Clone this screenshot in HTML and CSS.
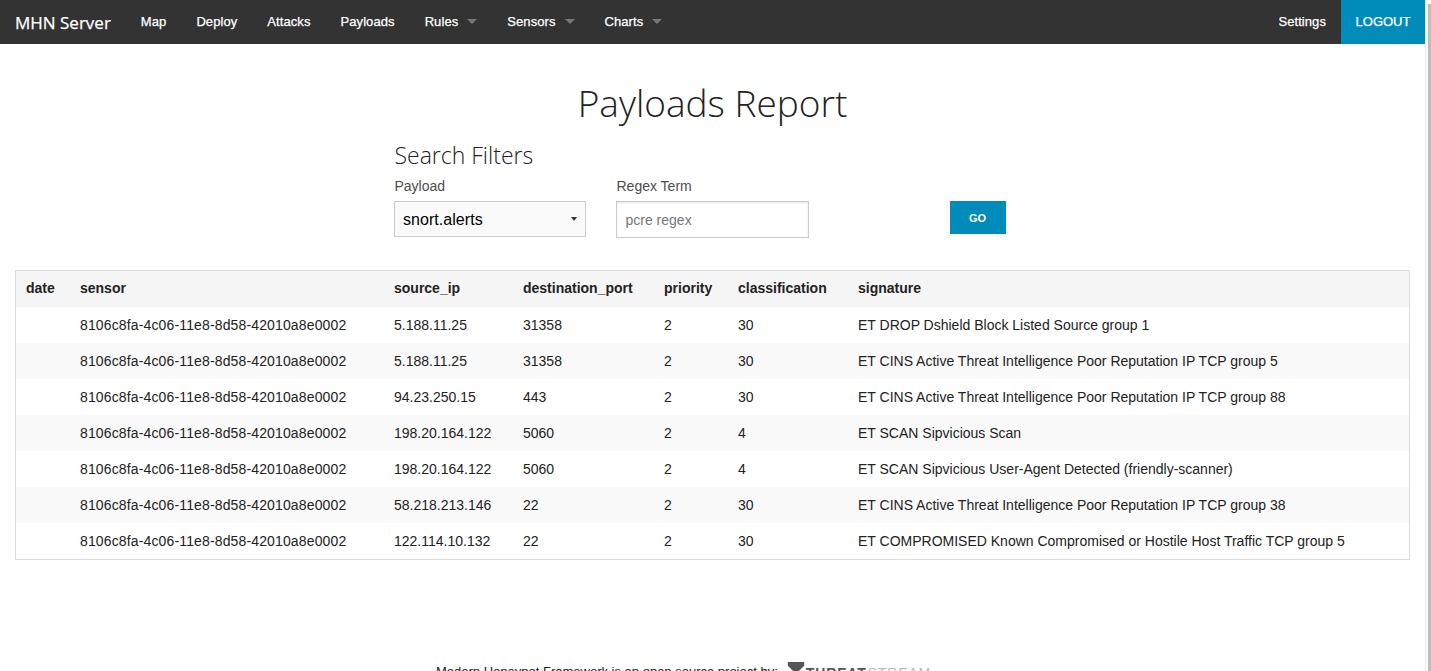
FILE: index.html
```html
<!DOCTYPE html>
<html lang="en">
<head>
    <meta charset="UTF-8">
    <title>Payloads Report</title>
    <link rel="stylesheet" href="styles.css">
</head>
<body>
    <div class="page">
        <nav class="topbar">
            <a class="brand" href="#">MHN Server</a>
            <ul class="menu">
                <li><a href="#">Map</a></li>
                <li><a href="#">Deploy</a></li>
                <li><a href="#">Attacks</a></li>
                <li><a href="#">Payloads</a></li>
                <li><a class="dropdown" href="#">Rules</a></li>
                <li><a class="dropdown" href="#">Sensors</a></li>
                <li><a class="dropdown" href="#">Charts</a></li>
            </ul>
            <a class="settings" href="#">Settings</a>
            <a class="logout" href="#">LOGOUT</a>
        </nav>

        <h1>Payloads Report</h1>

        <form class="filters">
            <h3>Search Filters</h3>
            <div class="filter-row">
                <div class="field field-payload">
                    <label for="payload">Payload</label>
                    <div class="select-box" id="payload">snort.alerts</div>
                </div>
                <div class="field field-regex">
                    <label for="regex">Regex Term</label>
                    <input type="text" id="regex" placeholder="pcre regex">
                </div>
                <button type="button" class="go">GO</button>
            </div>
        </form>

        <table class="report">
            <thead>
                <tr>
                    <th class="c-date">date</th>
                    <th class="c-sensor">sensor</th>
                    <th class="c-ip">source_ip</th>
                    <th class="c-port">destination_port</th>
                    <th class="c-prio">priority</th>
                    <th class="c-class">classification</th>
                    <th>signature</th>
                </tr>
            </thead>
            <tbody>
                <tr><td></td><td class="uuid">8106c8fa-4c06-11e8-8d58-42010a8e0002</td><td>5.188.11.25</td><td>31358</td><td>2</td><td>30</td><td>ET DROP Dshield Block Listed Source group 1</td></tr>
                <tr><td></td><td class="uuid">8106c8fa-4c06-11e8-8d58-42010a8e0002</td><td>5.188.11.25</td><td>31358</td><td>2</td><td>30</td><td>ET CINS Active Threat Intelligence Poor Reputation IP TCP group 5</td></tr>
                <tr><td></td><td class="uuid">8106c8fa-4c06-11e8-8d58-42010a8e0002</td><td>94.23.250.15</td><td>443</td><td>2</td><td>30</td><td>ET CINS Active Threat Intelligence Poor Reputation IP TCP group 88</td></tr>
                <tr><td></td><td class="uuid">8106c8fa-4c06-11e8-8d58-42010a8e0002</td><td>198.20.164.122</td><td>5060</td><td>2</td><td>4</td><td>ET SCAN Sipvicious Scan</td></tr>
                <tr><td></td><td class="uuid">8106c8fa-4c06-11e8-8d58-42010a8e0002</td><td>198.20.164.122</td><td>5060</td><td>2</td><td>4</td><td>ET SCAN Sipvicious User-Agent Detected (friendly-scanner)</td></tr>
                <tr><td></td><td class="uuid">8106c8fa-4c06-11e8-8d58-42010a8e0002</td><td>58.218.213.146</td><td>22</td><td>2</td><td>30</td><td>ET CINS Active Threat Intelligence Poor Reputation IP TCP group 38</td></tr>
                <tr><td></td><td class="uuid">8106c8fa-4c06-11e8-8d58-42010a8e0002</td><td>122.114.10.132</td><td>22</td><td>2</td><td>30</td><td>ET COMPROMISED Known Compromised or Hostile Host Traffic TCP group 5</td></tr>
            </tbody>
        </table>

        <footer class="credits">
            <span>Modern <a href="#">Honeypot Framework</a> is an open source project by:</span>
            <span class="logo">
                <svg width="18" height="20" viewBox="0 0 18 22"><path d="M0 0H18V4L11 11L18 18V22H0V18L7 11L0 4Z" fill="#555"/></svg>
                <span class="logo-a">THREAT</span><span class="logo-b">STREAM</span>
            </span>
        </footer>
    </div>
    <div class="scrollbar"><div class="scroll-thumb"></div></div>
</body>
</html>
```

FILE: styles.css
```css
html, body {
    margin: 0;
    padding: 0;
    height: 100%;
    overflow: hidden;
}

body {
    display: flex;
    font-family: "Liberation Sans", Arial, sans-serif;
    color: #222;
    background-color: #fff;
}

.page {
    flex: 1;
    height: 720px;
}

.scrollbar {
    display: flex;
    justify-content: flex-end;
    width: 6px;
    box-sizing: border-box;
    padding-top: 4px;
    background-color: #fbfbfb;
    border-left: 1px solid #e8e8e8;
}

.scroll-thumb {
    width: 3px;
    background-color: #bdbdbd;
}

/* top bar */
.topbar {
    display: flex;
    align-items: center;
    height: 44px;
    background-color: #333;
}

.topbar a {
    color: #fff;
    text-decoration: none;
    font-size: 13px;
    letter-spacing: 0.08px;
    -webkit-text-stroke: 0.25px #fff;
}

.topbar .brand {
    font-family: "Open Sans", sans-serif;
    font-size: 17px;
    letter-spacing: 0;
    margin-left: 15px;
    margin-right: 15px;
}

.menu {
    display: flex;
    list-style: none;
    margin: 0 0 2px;
    padding: 0;
    flex: 1;
}

.menu li {
    padding: 0 15px;
}

.menu .dropdown::after {
    content: "";
    display: inline-block;
    margin-left: 9px;
    vertical-align: 2px;
    border: 5px solid transparent;
    border-top-color: #777;
    border-bottom-width: 0;
}

.topbar .settings {
    margin: 0 15px 2px 0;
}

.topbar .logout {
    width: 84px;
    height: 44px;
    line-height: 43px;
    text-align: center;
    letter-spacing: 0;
    background-color: #008cba;
}

/* heading + filters */
h1 {
    margin: 0;
    padding-top: 36px;
    font-family: "Open Sans", sans-serif;
    font-weight: 300;
    font-size: 37px;
    line-height: 46px;
    text-align: center;
    color: #222;
}

.filters {
    width: 640px;
    margin: 0 auto;
    padding-left: 1px;
    box-sizing: border-box;
}

h3 {
    margin: 13px 0 0;
    padding-left: 1px;
    font-family: "Open Sans", sans-serif;
    font-weight: 300;
    font-size: 23px;
    line-height: 32px;
}

.filter-row {
    display: flex;
    align-items: flex-start;
}

.field label {
    display: block;
    padding-left: 1px;
    font-size: 14px;
    line-height: 20px;
    margin: 5px 0 5px;
    color: #4d4d4d;
}

.field-payload {
    width: 192px;
    margin-right: 30px;
}

.field-regex {
    width: 193px;
    margin-right: 141px;
}

.select-box {
    position: relative;
    height: 36px;
    box-sizing: border-box;
    padding-left: 8.5px;
    line-height: 35px;
    font-size: 16px;
    letter-spacing: 0.05px;
    color: #000;
    background-color: #fafafa;
    border: 1px solid #ccc;
}

.select-box::after {
    content: "";
    position: absolute;
    right: 8px;
    top: 15px;
    border: 3px solid transparent;
    border-top: 4px solid #333;
    border-bottom-width: 0;
}

.field input {
    display: block;
    width: 100%;
    height: 37px;
    box-sizing: border-box;
    padding: 0 9px;
    font-family: inherit;
    font-size: 14px;
    background-color: #fff;
    border: 1px solid #ccc;
    box-shadow: inset 0 1px 2px rgba(0, 0, 0, 0.1);
}

.field input::placeholder {
    color: #777;
}

.go {
    width: 56px;
    height: 33px;
    margin-top: 30px;
    padding: 0;
    border: 0;
    font-family: inherit;
    font-size: 11px;
    font-weight: bold;
    color: #fff;
    background-color: #008cba;
}

/* table */
.report {
    width: 1395px;
    margin: 32px 0 0 15px;
    border: 1px solid #ddd;
    border-collapse: collapse;
    table-layout: fixed;
    font-size: 14px;
    color: #222;
}

.report th {
    height: 34px;
    padding: 0 0 2px 10px;
    text-align: left;
    font-weight: bold;
    background-color: #f5f5f5;
}

.report td {
    height: 36px;
    padding: 0 0 0 10px;
}

.report .uuid {
    letter-spacing: 0.14px;
}

.report tbody tr:nth-child(even) {
    background-color: #f9f9f9;
}

.c-date { width: 44px; }
.c-sensor { width: 304px; }
.c-ip { width: 119px; }
.c-port { width: 131px; }
.c-prio { width: 64px; }
.c-class { width: 110px; }

/* footer */
.credits {
    display: flex;
    align-items: flex-start;
    gap: 9px;
    margin-top: 104px;
    padding-left: 436px;
    font-size: 13px;
    color: #222;
}

.credits a {
    color: #222;
    text-decoration: none;
}

.logo {
    display: flex;
    align-items: flex-start;
    gap: 1px;
    margin-top: -2px;
    font-size: 14px;
    line-height: 22px;
    letter-spacing: 0.85px;
}

.logo-a { color: #555; font-weight: bold; }
.logo-b { color: #bbb; }
```
